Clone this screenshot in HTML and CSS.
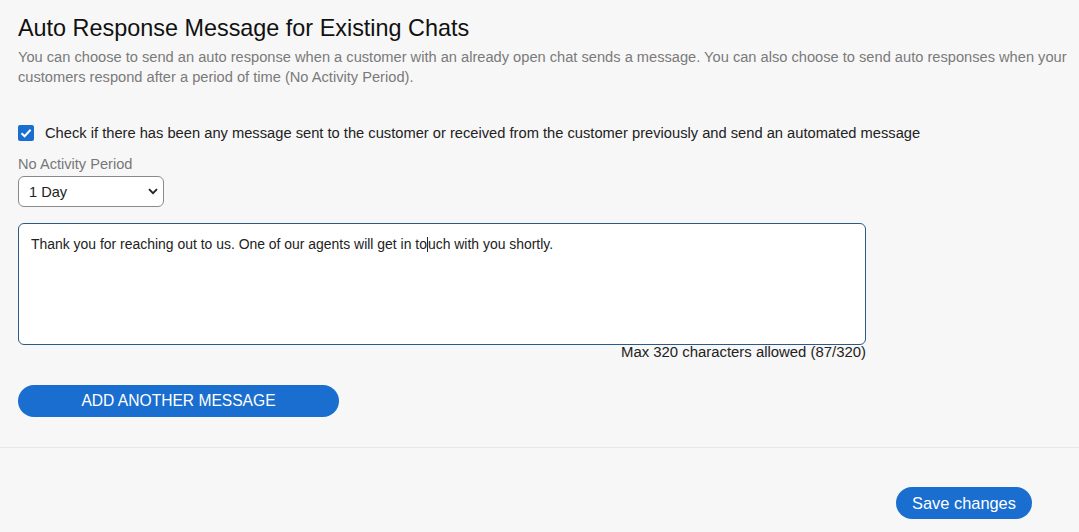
FILE: index.html
```html
<!DOCTYPE html>
<html>
<head>
<meta charset="utf-8">
<link rel="stylesheet" href="styles.css">
</head>
<body>
<main class="page">
  <section class="section">
    <h1 class="title">Auto Response Message for Existing Chats</h1>
    <p class="desc">You can choose to send an auto response when a customer with an already open chat sends a message. You can also choose to send auto responses when your customers respond after a period of time (No Activity Period).</p>

    <label class="check-row">
      <span class="checkbox">
        <svg width="16" height="16" viewBox="0 0 16 16"><rect width="16" height="16" rx="2" fill="#1a6ecf"/><path d="M3.5 8.2 L6.6 11.2 L12.6 4.8" fill="none" stroke="#fff" stroke-width="2"/></svg>
      </span>
      <span class="check-text">Check if there has been any message sent to the customer or received from the customer previously and send an automated message</span>
    </label>

    <div class="field-label">No Activity Period</div>
    <div class="select">
      <span>1 Day</span>
      <svg width="10" height="7" viewBox="0 0 10 7"><path d="M1 1.2 L5 5.2 L9 1.2" fill="none" stroke="#222" stroke-width="1.8"/></svg>
    </div>

    <div class="textarea">Thank you for reaching out to us. One of our agents will get in to<span class="caret"></span>uch with you shortly.</div>
    <div class="counter">Max 320 characters allowed (87/320)</div>

    <button class="btn-add">ADD ANOTHER MESSAGE</button>
  </section>
  <footer class="footer">
    <button class="btn-save">Save changes</button>
  </footer>
</main>
</body>
</html>
```

FILE: styles.css
```css
html, body {
  margin: 0;
  padding: 0;
  background: #f7f7f7;
  font-family: "Liberation Sans", Arial, sans-serif;
  color: #222;
}
.page {
  width: 1079px;
  height: 532px;
  overflow: hidden;
}
.section {
  padding: 14px 6px 30px 18px;
  border-bottom: 1px solid #e8e8e8;
}
.title {
  margin: 0;
  font-size: 23.4px;
  font-weight: normal;
  line-height: 28px;
  color: #111;
}
.desc {
  margin: 5px 0 0 0;
  font-size: 14.65px;
  line-height: 20px;
  color: #7a7a7a;
}
.check-row {
  display: flex;
  align-items: center;
  margin-top: 36px;
  gap: 11px;
}
.checkbox {
  display: flex;
  width: 16px;
  height: 16px;
}
.check-text {
  font-size: 14.7px;
  line-height: 20px;
  color: #222;
}
.field-label {
  margin-top: 11px;
  font-size: 14.6px;
  line-height: 20px;
  color: #777;
}
.select {
  margin-top: 2px;
  box-sizing: border-box;
  width: 146px;
  height: 31px;
  border: 1px solid #8a8a8a;
  border-radius: 6px;
  background: #fff;
  display: flex;
  align-items: center;
  justify-content: space-between;
  padding: 0 5px 0 10px;
  font-size: 14.6px;
}
.textarea {
  margin-top: 16px;
  box-sizing: border-box;
  width: 848px;
  height: 122px;
  border: 1px solid #2b5a86;
  border-radius: 6px;
  background: #fff;
  padding: 11px 12px;
  font-size: 13.95px;
  line-height: 18px;
  color: #222;
}
.caret {
  display: inline-block;
  width: 1px;
  height: 15px;
  background: #222;
  vertical-align: -3px;
}
.counter {
  width: 848px;
  text-align: right;
  font-size: 14.9px;
  line-height: 15px;
  margin-top: 0;
  color: #222;
}
.btn-add {
  margin-top: 25px;
  width: 321px;
  height: 32px;
  border: none;
  border-radius: 16px;
  background: #1a6ecf;
  color: #fff;
  font-family: "Liberation Sans", Arial, sans-serif;
  font-size: 15.6px;
  display: block;
}
.footer {
  display: flex;
  justify-content: flex-end;
  padding: 39px 47px 0 0;
}
.btn-save {
  width: 136px;
  height: 32px;
  border: none;
  border-radius: 16px;
  background: #1a6ecf;
  color: #fff;
  font-family: "Liberation Sans", Arial, sans-serif;
  font-size: 16.4px;
}
```
